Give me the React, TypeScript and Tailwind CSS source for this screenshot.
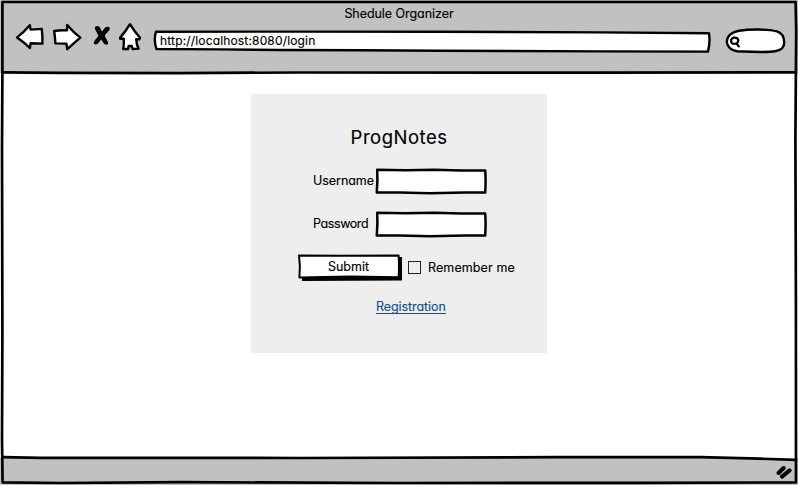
import type { ReactNode } from "react";

const stroke = {
  fill: "none",
  stroke: "#000",
  strokeWidth: 2.7,
  strokeLinejoin: "round" as const,
  strokeLinecap: "round" as const,
};

function WindowFrame() {
  return (
    <svg className="pointer-events-none absolute inset-0" width="798" height="485" viewBox="0 0 798 485" {...stroke}>
      <path d="M700 457 L760 457 L796 457 L796 460 L760 458.7Z" fill="#fff" stroke="none" />
      <path d="M2.4 2 L400 2 L795.6 2 L796.2 30 L795.4 140 L795.9 300 L796 482.4 L640 482.8 L400 483 L180 482.2 L60 483 L2.6 482.4 L2 440 L2.4 330 L2 150 L2.4 70 Z" />
      <path d="M3 72.4 L60 72.8 L180 73.1 L300 72.5 L598 72.6 L796 72.4" />
      <path d="M3 457.2 L40 457.8 L300 458 L560 457.2 L700 457.2 L760 458.7 L796 459.8" />
    </svg>
  );
}

function BackIcon() {
  return (
    <svg width="31" height="30" viewBox="14 22 31 30" {...stroke} fill="#fff" strokeWidth={2.4}>
      <path d="M17 37.4 Q24 32 29.8 25.2 L30.6 29.6 L41.8 28.9 Q42.6 36 42.4 43.6 L30.6 43.2 L29.9 48 Q24 42 17 37.4Z" />
    </svg>
  );
}

function ForwardIcon() {
  return (
    <svg width="31" height="30" viewBox="52 22 31 30" {...stroke} fill="#fff" strokeWidth={2.4}>
      <path d="M54.2 31 Q60 30 67 30.4 L67.2 25 Q73 32 80.3 37.6 Q74 43 67.3 49.2 L66.4 43.6 L55.4 43.4 Q55 37 54.2 31Z" />
    </svg>
  );
}

function StopIcon() {
  return (
    <svg width="18" height="30" viewBox="93 22 18 30">
      <path d="M94.8 28.2 C94.8 25.4 98.8 25.4 100.2 28 L101.9 31.4 L105.2 27.6 C107 26.2 110 26.8 109.8 28.6 C109.4 31.4 106 33.2 104.8 35.8 C105.4 38.2 108.2 41.2 108.2 43.4 C107.8 45.4 104.8 45 103.8 43.6 L101.2 39.6 L98 43.4 C96.4 45 93.4 44.8 93.8 42.6 C94.2 40.2 97.4 38 98.4 35.8 C97.8 33.4 95 30.6 94.8 28.2Z" fill="#000" />
    </svg>
  );
}

function HomeIcon() {
  return (
    <svg width="26" height="30" viewBox="117 22 26 30" {...stroke} fill="#fff" strokeWidth={2.4}>
      <path d="M130 24.2 Q134 31 140 37.8 L139.4 39.4 L136.2 39.2 Q136.4 44.5 138.6 48.6 L132.6 49 L131.8 46 L128.6 46 L128.2 49 L123.2 49 Q124.2 44 123.8 38.8 L120.2 38.8 L120.2 37.6 Q126 31 130 24.2Z" />
    </svg>
  );
}

function SearchPill() {
  return (
    <svg width="62" height="28" viewBox="725 27 62 28" {...stroke} strokeWidth={2.4}>
      <path d="M737 51.2 C730 50.4 726.8 45.5 726.8 41.5 C727 36 732 31.8 739 30.8 C750 29 768 29 777 31.4 C783 33.4 784.2 38 784.2 42.5 C784.2 48 781.5 50 776 51 C764 53 749 51.7 737 51.2Z" fill="#fff" />
      <path d="M736 38 C732.4 36.6 730.6 39.6 731.2 41.8 C732 44.8 736.5 44.4 737.9 42 C738.8 40 738 38.2 736 38 M737 44 L738.8 46.4" strokeWidth={2.3} />
    </svg>
  );
}

function AddressBar() {
  return (
    <div className="relative flex h-6 w-[560px] items-center pl-[8px]">
      <svg className="absolute inset-0" width="560" height="24" viewBox="152 29 560 24" {...stroke} strokeWidth={2.4}>
        <path d="M156 31.7 L300 31.6 L440 31.8 L600 32.4 L709 33.2 Q710.4 42 708 51.6 L600 51.4 L440 50.8 L360 50.2 L280 50 L220 49.4 L156.4 49 Q153.4 40 156 31.7Z" fill="#fff" />
      </svg>
      <span className="relative text-[12px] leading-6 tracking-[0.16px]">http://localhost:8080/login</span>
    </div>
  );
}

function Field({ label, type, tracking }: { label: string; type: string; tracking: string }) {
  return (
    <label className="flex h-[27px] items-center">
      <span className={"w-[62px] whitespace-nowrap text-[12.5px] " + tracking}>{label}</span>
      <span className="relative block h-[27px] w-[113px]">
        <svg className="absolute inset-0" width="113" height="27" viewBox="0 0 113 27" {...stroke} strokeWidth={2.5}>
          <path d="M2.2 1.8 L30 2.3 L60 1.8 L86 2.4 L110.2 2.4 Q111 12 110.2 24.6 L90 24.4 L55 25.2 L25 24.6 L1.8 24.4 Q2.8 12 2.2 1.8Z" fill="#fff" />
        </svg>
        <input type={type} className="absolute inset-[4px] bg-transparent outline-none" />
      </span>
    </label>
  );
}

function SubmitButton({ children }: { children: ReactNode }) {
  return (
    <button className="relative flex h-[28px] w-[106px] items-center justify-center pr-[3px] pb-[1px]">
      <svg className="absolute inset-0" width="106" height="28" viewBox="297 254 106 28" {...stroke} strokeWidth={2}>
        <path d="M302 257 H402 V280.4 L302 281Z" fill="#000" stroke="none" />
        <path d="M299 255.4 L340 255.8 L398.6 255.4 Q399.4 268 398.6 277.2 L350 276.4 L299.4 277.4 Q300.6 266 299 255.4Z" fill="#fff" />
      </svg>
      <span className="relative text-[12.5px] tracking-[0px]">{children}</span>
    </button>
  );
}

export default function App() {
  return (
    <div className="relative flex h-[485px] w-[798px] flex-col overflow-hidden bg-white font-['Inter','Lato',sans-serif] text-black [-webkit-text-stroke:0.15px] [font-feature-settings:'cv11','ss03']">
      <header className="h-[73px] bg-[#c1c1c1]">
        <h1 className="h-[22px] pt-[5px] text-center text-[12.5px] leading-[18px] tracking-[-0.05px]">Shedule Organizer</h1>
        <div className="flex h-[30px] items-start pl-[14px]">
          <div className="flex">
            <BackIcon />
            <span className="ml-[7px]"><ForwardIcon /></span>
            <span className="ml-[10px]"><StopIcon /></span>
            <span className="ml-[6px]"><HomeIcon /></span>
          </div>
          <div className="mt-[7px] ml-[9px]"><AddressBar /></div>
          <div className="mt-[5px] ml-[13px]"><SearchPill /></div>
        </div>
      </header>

      <main className="flex flex-1 items-start justify-center pt-[21px]">
        <form className="flex h-[259px] w-[296px] flex-col rounded-tr-[3px] bg-[#eeeeee]">
          <h2 className="mt-[29px] h-[28px] text-center text-[18.5px] leading-[28px] tracking-[0.5px]">ProgNotes</h2>
          <div className="mt-[17px] ml-[62px] flex flex-col gap-[16px]">
            <Field label="Username" type="text" tracking="tracking-[-0.05px]" />
            <Field label="Password" type="password" tracking="tracking-[-0.4px]" />
          </div>
          <div className="mt-[16px] ml-[46px] flex items-center">
            <SubmitButton>Submit</SubmitButton>
            <label className="ml-[5px] flex items-center gap-[7px]">
              <span className="mb-[2px] block h-[13px] w-[13px] border border-[#222]" />
              <span className="text-[12.5px] whitespace-nowrap tracking-[0.1px]">Remember me</span>
            </label>
          </div>
          <a className="mt-[16px] ml-[125px] h-[16px] self-start border-b border-[#134f8f] text-[12.5px] leading-[18px] tracking-[-0.08px] text-[#134f8f]">Registration</a>
        </form>
      </main>

      <footer className="flex h-[27px] items-center justify-end bg-[#c1c1c1] pr-[4px]">
        <svg width="18" height="16" viewBox="776 464 18 16" {...stroke} strokeWidth={4}>
          <path d="M778.6 473 L783.6 468 M782 476.6 L789.6 470.4" />
        </svg>
      </footer>
      <WindowFrame />
    </div>
  );
}
